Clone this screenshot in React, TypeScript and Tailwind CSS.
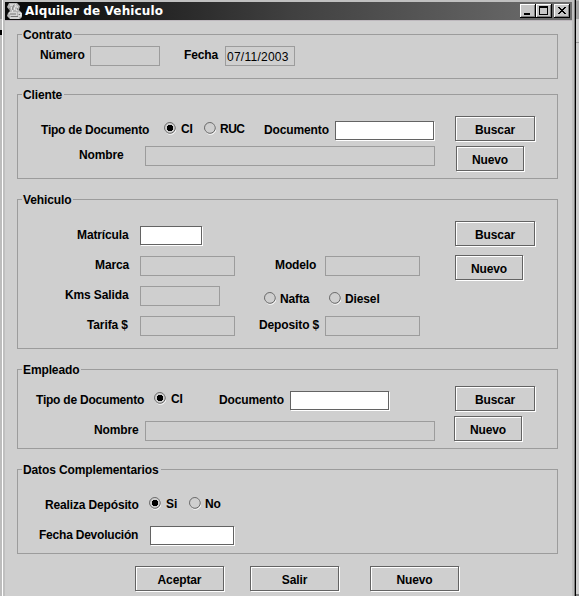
import type { ReactNode } from "react";

type Box = { className?: string };

function Label({ className = "", children }: Box & { children: ReactNode }) {
  return (
    <span className={`block h-3.5 shrink-0 whitespace-nowrap text-xs leading-3.5 font-bold ${className}`}>
      {children}
    </span>
  );
}

function ReadOnly({ className = "", children }: Box & { children?: ReactNode }) {
  return (
    <div className={`h-5 shrink-0 border border-[#9c9c9c] pt-[3px] pl-px text-xs leading-3.5 tracking-[0.25px] ${className}`}>
      {children}
    </div>
  );
}

function Field({ className = "" }: Box) {
  return (
    <div
      className={`mr-px h-[19px] shrink-0 border border-[#636363] bg-white shadow-[1px_1px_0_#fff] ${className}`}
    />
  );
}

function Button({ className = "", children }: Box & { children: ReactNode }) {
  return (
    <button
      className={`mr-px mb-px block h-[25px] shrink-0 border border-[#636363] pt-0.5 text-center text-xs leading-3.5 font-bold tracking-[-0.12px] shadow-[1px_1px_0_#fff,inset_1px_1px_0_#fff] ${className}`}
    >
      {children}
    </button>
  );
}

function Radio({ className = "", checked = false }: Box & { checked?: boolean }) {
  return (
    <svg className={`h-[13px] w-3 shrink-0 ${className}`} viewBox="0 0 12 13" fill="none">
      <circle cx="6.4" cy="6.6" r="5.7" stroke="#fff" />
      <circle cx="5.9" cy="5.9" r="5.4" fill="#cfcfcf" stroke="#666" />
      {checked && <path d="M4 3h4v1h1v4H8v1H4V8H3V4h1z" fill="#000" />}
    </svg>
  );
}

function Panel({ title, className = "", children }: Box & { title: string; children: ReactNode }) {
  return (
    <section className={`ml-3 w-[541px] border border-[#9c9c9c] ${className}`}>
      <h2 className="-mt-[7px] ml-1 h-3.5 w-fit bg-[#cfcfcf] pr-0.5 pl-px text-xs leading-3.5 font-bold whitespace-nowrap">
        {title}
      </h2>
      <div className="flex items-start">{children}</div>
    </section>
  );
}

const rowClass = "flex items-start";

function TitleBar() {
  return (
    <header className="flex h-[18px] w-[567px] items-start bg-linear-to-r from-[#080808] via-[#404040] to-[#6e6e6e]">
      <svg className="mt-px ml-0.5 h-4 w-4" viewBox="0 0 16 16" fill="none">
        <path d="M2 0h8l3 3-1 4 3 3v4l-2 2H3l-3-3 1-3 2-2-3-4z" fill="#b5b5b5" />
        <path d="M3 2h4M8 1c3 2-2 3 0 6M5 4c-2 2 2 3 0 5M10 3c1 2-1 3 0 5M2 10h8M3 12h7M3 15h9M11 10h3v3h-3" stroke="#f5f5f5" />
        <path d="M6 2c2 1-2 3 0 5M10 5l1 2M2 5l1 2M3 11h6M4 13.5h7M12 11.5h1" stroke="#777" />
      </svg>
      <h1 className="mt-px ml-0.5 w-[142px] font-['DejaVu_Sans'] text-xs leading-4 font-bold tracking-[0.14px] whitespace-nowrap text-white">
        Alquiler de Vehiculo
      </h1>
      <div className="mt-0.5 mr-0.5 ml-auto flex">
        <Caption>
          <path d="M4 9h6v2H4z" fill="#000" />
        </Caption>
        <Caption>
          <path d="M3 2h9v9H3zM4 4v6h7V4z" fill="#000" fillRule="evenodd" />
        </Caption>
        <Caption className="ml-0.5">
          <path d="M4 3h2v1h1v1h2V4h1V3h2v1h-1v1h-1v1H9v1h1v1h1v1h1v1h-2V9H9V8H7v1H6v1H4V9h1V8h1V7h1V6H6V5H5V4H4z" fill="#000" />
        </Caption>
      </div>
    </header>
  );
}

function Caption({ className = "", children }: Box & { children: ReactNode }) {
  return (
    <svg className={`h-3.5 w-4 ${className}`} viewBox="0 0 16 14" shapeRendering="crispEdges">
      <path d="M0 0h16v14H0z" fill="#000" />
      <path d="M0 0h15v13H0z" fill="#fff" />
      <path d="M1 1h14v12H1z" fill="#808080" />
      <path d="M1 1h13v11H1z" fill="#c6c6c6" />
      {children}
    </svg>
  );
}

export default function App() {
  return (
    <div className="flex h-[596px] w-[579px] overflow-hidden bg-[#cfcfcf] font-['Liberation_Sans',Arial,sans-serif] tracking-[-0.12px] text-black">
      <aside className="h-full w-0.5 shrink-0 bg-[#bdbdbd]">
        <div className="h-[19px] bg-[#8f8f8f]" />
        <div className="mt-[11px] h-[5px] bg-black" />
      </aside>
      <div className="h-full w-px shrink-0 bg-white" />
      <div className="h-full w-0.5 shrink-0 bg-[#bfbfbf]" />
      <main className="h-full w-[567px] shrink-0">
        <div className="h-0.5 bg-[#c0c0c0]" />
        <TitleBar />
        <div className="h-px bg-[#bdb8bd]" />

        <Panel title="Contrato" className="mt-[13px] h-[45px]">
          <div className={rowClass}>
            <Label className="mt-1.5 ml-[22px] w-11">Número</Label>
            <ReadOnly className="mt-1 ml-1.5 w-[70px]" />
            <Label className="mt-1.5 ml-6 w-[34px]">Fecha</Label>
            <ReadOnly className="mt-1 ml-[7px] w-[70px]">07/11/2003</ReadOnly>
          </div>
        </Panel>

        <Panel title="Cliente" className="mt-[15px] h-[85px]">
          <div className="w-[437px]">
            <div className={`${rowClass} h-11`}>
              <Label className="mt-[21px] ml-[23px] w-[108px] tracking-[-0.22px]">Tipo de Documento</Label>
              <Radio className="mt-5 ml-[15px]" checked />
              <Label className="mt-5 ml-[5px] w-2.5">CI</Label>
              <Radio className="mt-5 ml-[13px]" />
              <Label className="mt-5 ml-1 w-[25px] tracking-[-0.5px]">RUC</Label>
              <Label className="mt-[21px] ml-[19px] w-[65px]">Documento</Label>
              <Field className="mt-[19px] ml-1.5 w-[99px]" />
            </div>
            <div className={rowClass}>
              <Label className="mt-0.5 ml-[61px] w-[46px]">Nombre</Label>
              <ReadOnly className="ml-5 w-[290px]" />
            </div>
          </div>
          <div>
            <Button className="mt-3.5 w-20">Buscar</Button>
            <Button className="mt-[5px] ml-px w-[68px]">Nuevo</Button>
          </div>
        </Panel>

        <Panel title="Vehiculo" className="mt-5 h-[150px]">
          <div className="w-[437px]">
            <div className={`${rowClass} h-[49px]`}>
              <Label className="mt-[21px] ml-[59px] w-[52px]">Matrícula</Label>
              <Field className="mt-[19px] ml-[11px] w-[62px]" />
            </div>
            <div className={`${rowClass} h-[30px]`}>
              <Label className="mt-0.5 ml-[77px] w-[35px]">Marca</Label>
              <ReadOnly className="ml-2.5 w-[95px]" />
              <Label className="mt-0.5 ml-10 w-10">Modelo</Label>
              <ReadOnly className="ml-2.5 w-[95px]" />
            </div>
            <div className={`${rowClass} h-[30px]`}>
              <Label className="mt-0.5 ml-[47px] w-16">Kms Salida</Label>
              <ReadOnly className="ml-[11px] w-20" />
              <Radio className="mt-1.5 ml-11" />
              <Label className="mt-1.5 ml-1 w-[30px]">Nafta</Label>
              <Radio className="mt-1.5 ml-[19px]" />
              <Label className="mt-1.5 ml-1">Diesel</Label>
            </div>
            <div className={rowClass}>
              <Label className="mt-0.5 ml-[69px] w-[42px]">Tarifa $</Label>
              <ReadOnly className="ml-[11px] w-[95px]" />
              <Label className="mt-0.5 ml-6 w-[60px]">Deposito $</Label>
              <ReadOnly className="ml-1.5 w-[95px]" />
            </div>
          </div>
          <div>
            <Button className="mt-3.5 w-20">Buscar</Button>
            <Button className="mt-[9px] w-[68px]">Nuevo</Button>
          </div>
        </Panel>

        <Panel title="Empleado" className="mt-5 h-20">
          <div className="w-[437px]">
            <div className={`${rowClass} h-11`}>
              <Label className="mt-4 ml-[18px] w-[108px] tracking-[-0.22px]">Tipo de Documento</Label>
              <Radio className="mt-[15px] ml-2.5" checked />
              <Label className="mt-[15px] ml-[5px] w-2.5">CI</Label>
              <Label className="mt-4 ml-[38px] w-[65px]">Documento</Label>
              <Field className="mt-3.5 ml-1.5 w-[99px]" />
            </div>
            <div className={rowClass}>
              <Label className="mt-0.5 ml-[76px] w-[46px]">Nombre</Label>
              <ReadOnly className="ml-[5px] w-[290px]" />
            </div>
          </div>
          <div>
            <Button className="mt-[9px] w-20">Buscar</Button>
            <Button className="mt-[5px] -ml-px w-[68px]">Nuevo</Button>
          </div>
        </Panel>

        <Panel title="Datos Complementarios" className="mt-5 h-[85px]">
          <div>
            <div className={`${rowClass} h-[49px]`}>
              <Label className="mt-[21px] ml-[27px] w-[94px] tracking-[-0.15px]">Realiza Depósito</Label>
              <Radio className="mt-5 ml-2.5" checked />
              <Label className="mt-5 ml-[5px] w-[11px]">Si</Label>
              <Radio className="mt-5 ml-3" />
              <Label className="mt-5 ml-1">No</Label>
            </div>
            <div className={rowClass}>
              <Label className="mt-0.5 ml-[21px] w-[99px] tracking-[-0.22px]">Fecha Devolución</Label>
              <Field className="ml-3 w-[84px]" />
            </div>
          </div>
        </Panel>

        <footer className="mt-3 ml-[130px] flex">
          <Button className="w-[89px]">Aceptar</Button>
          <Button className="ml-[25px] w-[89px]">Salir</Button>
          <Button className="ml-[30px] w-[89px]">Nuevo</Button>
        </footer>
      </main>
      <div className="h-full w-0.5 shrink-0 bg-[#bfbfbf]" />
      <div className="h-full w-px shrink-0 bg-[#808080]" />
      <div className="h-full w-px shrink-0 bg-black" />
      <aside className="h-full w-[3px] shrink-0">
        <div className="h-px bg-[#bdbdbd]" />
        <div className="h-[18px] bg-[#a3a3a3]" />
        <div className="mt-[23px] h-px bg-[#9c9c9c]" />
        <div className="mt-[551px] h-0.5 bg-[#808080]" />
      </aside>
    </div>
  );
}
